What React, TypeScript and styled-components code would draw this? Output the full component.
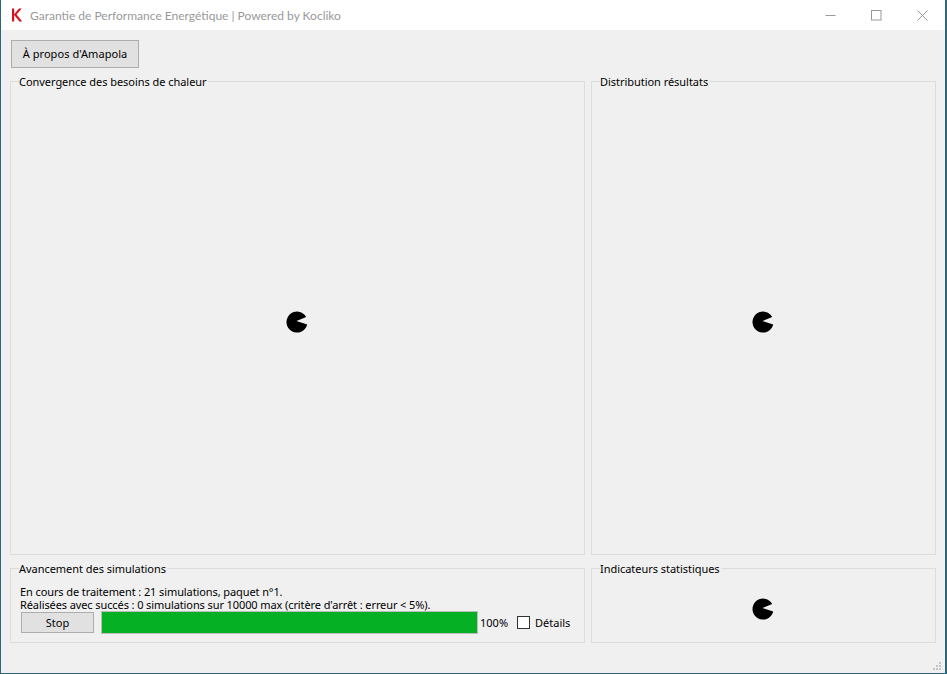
import React from "react";
import styled, { createGlobalStyle } from "styled-components";

const GlobalStyle = createGlobalStyle`
  html, body {
    margin: 0;
    padding: 0;
    background: #2f6579;
  }
  * {
    box-sizing: border-box;
  }
`;

function Spinner() {
  return (
    <SpinnerIcon width="22" height="22" viewBox="0 0 22 22">
      <path d="M20.2 6 A10.5 10.5 0 1 0 21.2 13.5 L10.5 10 Z" fill="#000" />
    </SpinnerIcon>
  );
}

function Group({ title, small, children }: { title: string; small?: boolean; children?: React.ReactNode }) {
  return (
    <GroupBox $small={small}>
      <GroupTitle>{title}</GroupTitle>
      {children}
    </GroupBox>
  );
}

export default function App() {
  return (
    <Win>
      <GlobalStyle />
      <TitleBar>
        <Logo width="12" height="14" viewBox="0 0 12 14">
          <path d="M1 0.5 H3.2 V6.2 L8 0.5 H10.8 L5.6 6.5 L11.2 13.5 H8.4 L3.2 7 V13.5 H1 Z" fill="#d8121f" />
        </Logo>
        <AppTitle>Garantie de Performance Energétique | Powered by Kocliko</AppTitle>
        <WinButtons>
          <WinButton>
            <svg width="11" height="11" viewBox="0 0 11 11">
              <path d="M0.5 5.5 H10.5" stroke="#999" strokeWidth="1" />
            </svg>
          </WinButton>
          <WinButton>
            <svg width="11" height="11" viewBox="0 0 11 11">
              <rect x="0.5" y="0.5" width="9.5" height="9.5" fill="none" stroke="#999" strokeWidth="1" />
            </svg>
          </WinButton>
          <WinButton>
            <svg width="11" height="11" viewBox="0 0 11 11">
              <path d="M0.5 0.5 L10.5 10.5 M10.5 0.5 L0.5 10.5" stroke="#999" strokeWidth="1" />
            </svg>
          </WinButton>
        </WinButtons>
      </TitleBar>
      <Body>
        <AboutButton>À propos d'Amapola</AboutButton>
        <Panels>
          <Group title="Convergence des besoins de chaleur">
            <Spinner />
          </Group>
          <Group title="Distribution résultats">
            <Spinner />
          </Group>
          <Group title="Avancement des simulations" small>
            <Status>
              <div>En cours de traitement : 21 simulations, paquet n°1.</div>
              <div>Réalisées avec succés : 0 simulations sur 10000 max (critère d'arrêt : erreur &lt; 5%).</div>
              <ControlRow>
                <StopButton>Stop</StopButton>
                <Progress>
                  <ProgressFill style={{ width: "100%" }} />
                </Progress>
                <Percent>100%</Percent>
                <CheckLabel>
                  <CheckBox />
                  Détails
                </CheckLabel>
              </ControlRow>
            </Status>
          </Group>
          <Group title="Indicateurs statistiques" small>
            <Spinner />
          </Group>
        </Panels>
        <Grip width="10" height="10" viewBox="0 0 10 10">
          <path d="M6 0h2v2H6zM6 3h2v2H6zM3 3h2v2H3zM6 6h2v2H6zM3 6h2v2H3zM0 6h2v2H0z" fill="#c4c4c4" />
        </Grip>
      </Body>
    </Win>
  );
}

const Win = styled.div`
  width: 947px;
  height: 674px;
  padding: 0 2px 1px 1px;
  display: flex;
  flex-direction: column;
  font-family: "Noto Sans", sans-serif;
  font-size: 11px;
  color: #000;
`;

const TitleBar = styled.div`
  height: 30px;
  background: #fff;
  display: flex;
  align-items: center;
  padding-left: 10px;
`;

const Logo = styled.svg`
  margin-right: 7px;
`;

const AppTitle = styled.div`
  font-family: Lato, "Noto Sans", sans-serif;
  font-size: 12px;
  color: #999;
  flex: 1;
`;

const WinButtons = styled.div`
  display: flex;
`;

const WinButton = styled.div`
  width: 46px;
  height: 30px;
  display: flex;
  align-items: center;
  justify-content: center;
`;

const Body = styled.div`
  position: relative;
  flex: 1;
  background: #f0f0f0;
  padding: 10px 9px 30px 9px;
  display: flex;
  flex-direction: column;
`;

const AboutButton = styled.button`
  width: 128px;
  height: 28px;
  margin-left: 1px;
  padding: 0 0 2px;
  background: #e1e1e1;
  border: 1px solid #adadad;
  font: inherit;
  letter-spacing: 0.06px;
  color: inherit;
`;

const Panels = styled.div`
  margin-top: 13px;
  flex: 1;
  display: grid;
  grid-template-columns: 575px 345px;
  grid-template-rows: 474px 75px;
  column-gap: 6px;
  row-gap: 13px;
`;

const GroupBox = styled.div<{ $small?: boolean }>`
  position: relative;
  border: 1px solid #dcdcdc;
  display: flex;
  align-items: center;
  justify-content: center;
  padding: ${({ $small }) => ($small ? "6px" : "8px")} 2px 0 0;
`;

const GroupTitle = styled.div`
  position: absolute;
  top: -8px;
  left: 8px;
  padding-right: 1px;
  line-height: 15px;
  letter-spacing: -0.04px;
  background: #f0f0f0;
`;

const SpinnerIcon = styled.svg`
  display: block;
`;

const Status = styled.div`
  width: 100%;
  align-self: flex-start;
  padding: 10px 0 0 9px;
  line-height: 13px;
  letter-spacing: -0.1px;
`;

const ControlRow = styled.div`
  display: flex;
  align-items: center;
  height: 23px;
  letter-spacing: 0;
`;

const StopButton = styled.button`
  width: 73px;
  height: 21px;
  margin-left: 1px;
  padding: 0;
  background: #e1e1e1;
  border: 1px solid #adadad;
  font: inherit;
  color: inherit;
`;

const Progress = styled.div`
  width: 377px;
  height: 23px;
  margin-left: 7px;
  border: 1px solid #bcbcbc;
  background: #e6e6e6;
`;

const ProgressFill = styled.div`
  height: 100%;
  background: #06b025;
`;

const Percent = styled.span`
  margin-left: 2px;
  width: 37px;
`;

const CheckLabel = styled.label`
  display: flex;
  align-items: center;
  gap: 5px;
`;

const CheckBox = styled.span`
  width: 13px;
  height: 13px;
  background: #fff;
  border: 1px solid #333;
`;

const Grip = styled.svg`
  position: absolute;
  right: 2px;
  bottom: 1px;
`;
